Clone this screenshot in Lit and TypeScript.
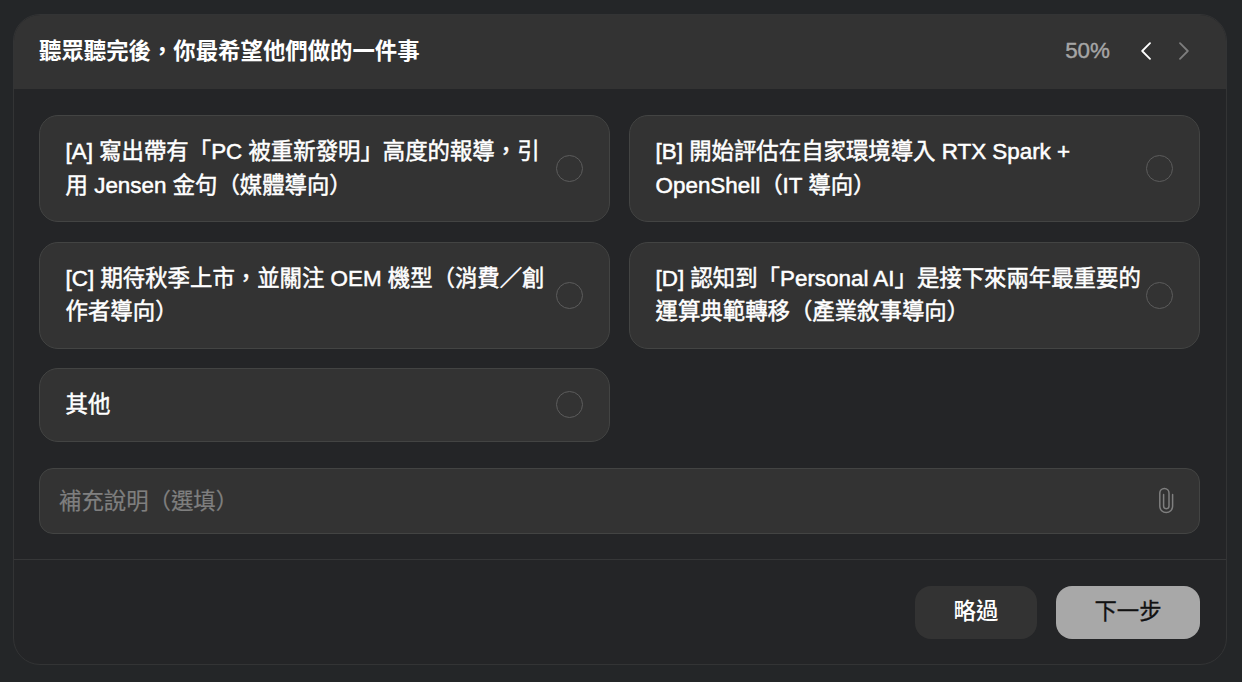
import { LitElement, html, css } from 'lit'
import { customElement, property, state } from 'lit/decorators.js'
import { classMap } from 'lit/directives/class-map.js'

interface Choice {
  id: string
  label: string
}

const CHOICES: Choice[] = [
  { id: 'a', label: '[A] 寫出帶有「PC 被重新發明」高度的報導，引用 Jensen 金句（媒體導向）' },
  { id: 'b', label: '[B] 開始評估在自家環境導入 RTX Spark + OpenShell（IT 導向）' },
  { id: 'c', label: '[C] 期待秋季上市，並關注 OEM 機型（消費／創作者導向）' },
  { id: 'd', label: '[D] 認知到「Personal AI」是接下來兩年最重要的運算典範轉移（產業敘事導向）' },
  { id: 'other', label: '其他' }
]

/**
 * A single selectable answer with a radio mark on the right.
 */
@customElement('choice-card')
export class ChoiceCard extends LitElement {
  @property({ type: String }) label = ''
  @property({ type: Boolean }) selected = false

  static styles = css`
    :host {
      display: block;
    }

    .card {
      display: flex;
      align-items: center;
      gap: 3px;
      box-sizing: border-box;
      width: 100%;
      padding: 19px 26px 19px 25.6px;
      border: 1px solid #434443;
      border-radius: 19px;
      background: #333333;
      color: #ffffff;
      font: inherit;
      text-align: left;
      cursor: pointer;
    }

    .label {
      flex: 1;
      min-width: 0;
      -webkit-text-stroke: 0.5px currentColor;
    }

    .mark {
      flex: none;
      box-sizing: border-box;
      width: 27px;
      height: 27px;
      border: 1px solid #5c5c5c;
      border-radius: 50%;
    }

    .mark--selected {
      border: 8px solid #ffffff;
    }
  `

  render() {
    return html`
      <button class="card" role="radio" aria-checked=${this.selected}>
        <span class="label">${this.label}</span>
        <span class=${classMap({ mark: true, 'mark--selected': this.selected })}></span>
      </button>
    `
  }
}

@customElement('app-root')
export class AppRoot extends LitElement {
  @state() private selected = ''

  static styles = css`
    :host {
      display: block;
      box-sizing: border-box;
      height: 682px;
      padding: 14px 15px 17px 13px;
      background: #242628;
      color: #ffffff;
      font-family: 'Liberation Sans', 'Noto Sans CJK TC', sans-serif;
      font-size: 22.4px;
      line-height: 33.5px;
    }

    .panel {
      display: flex;
      flex-direction: column;
      box-sizing: border-box;
      height: 651px;
      border: 1px solid #333435;
      border-radius: 27px;
      background: #242527;
      overflow: hidden;
    }

    .header {
      display: flex;
      align-items: center;
      box-sizing: border-box;
      height: 74px;
      padding: 0 23px 2px 25px;
      background: #333333;
    }

    .title {
      flex: 1;
      margin: 0;
      padding-top: 2px;
      font-size: inherit;
      font-weight: 700;
    }

    .progress {
      margin-right: 17px;
      color: #a6a6a6;
      -webkit-text-stroke: 0.4px currentColor;
    }

    .nav {
      display: grid;
      place-items: center;
      width: 38px;
      height: 38px;
      padding: 0;
      border: 0;
      border-radius: 50%;
      background: none;
      color: #ffffff;
    }

    .nav--disabled {
      color: #7d7d7d;
    }

    .body {
      display: flex;
      flex-direction: column;
      gap: 26.3px;
      box-sizing: border-box;
      height: 470px;
      padding: 26.2px 26px 25px 25px;
    }

    .choices {
      display: grid;
      grid-template-columns: 1fr 1fr;
      gap: 19.5px 19px;
    }

    .note {
      display: flex;
      align-items: center;
      box-sizing: border-box;
      height: 66px;
      padding: 0 20px 0 19px;
      border: 1px solid #434443;
      border-radius: 14px;
      background: #333333;
      color: #7f7f7f;
    }

    .note-text {
      flex: 1;
      padding-top: 2px;
      -webkit-text-stroke: 0.2px currentColor;
    }

    .footer {
      display: flex;
      flex: 1;
      align-items: center;
      justify-content: flex-end;
      gap: 19px;
      padding-right: 26px;
      border-top: 1px solid #363738;
    }

    .button {
      width: 122px;
      height: 53px;
      padding: 0 0 1px;
      border: 0;
      border-radius: 16px;
      background: #333333;
      color: #ffffff;
      font: inherit;
      font-weight: 500;
    }

    .button--primary {
      width: 144px;
      background: #a8a8a8;
      color: #111111;
      font-weight: 400;
      -webkit-text-stroke: 0.3px currentColor;
    }

    svg {
      display: block;
      fill: none;
      stroke: currentColor;
      stroke-linecap: round;
      stroke-linejoin: round;
    }
  `

  private select(id: string) {
    this.selected = id
  }

  render() {
    return html`
      <section class="panel">
        <header class="header">
          <h2 class="title">聽眾聽完後，你最希望他們做的一件事</h2>
          <span class="progress">50%</span>
          <button class="nav" aria-label="上一題">
            <svg width="10" height="18" viewBox="0 0 10 18" stroke-width="1.8">
              <path d="M9 1.2 1.2 9 9 16.8" />
            </svg>
          </button>
          <button class="nav nav--disabled" aria-label="下一題" disabled>
            <svg width="10" height="18" viewBox="0 0 10 18" stroke-width="1.8">
              <path d="M1 1.2 8.8 9 1 16.8" />
            </svg>
          </button>
        </header>

        <div class="body">
          <div class="choices" role="radiogroup">
            ${CHOICES.map(
              (choice) => html`
                <choice-card
                  .label=${choice.label}
                  .selected=${this.selected === choice.id}
                  @click=${() => this.select(choice.id)}
                ></choice-card>
              `
            )}
          </div>
          <div class="note">
            <span class="note-text">補充說明（選填）</span>
            <svg width="26" height="28" viewBox="0 0 26 28" stroke-width="1.5">
              <path d="M19.6 7.4v11.8a6.4 6.4 0 0 1-12.8 0V6a4.6 4.6 0 0 1 9.2 0v13a2.7 2.7 0 0 1-5.4 0V7.4" />
            </svg>
          </div>
        </div>

        <footer class="footer">
          <button class="button">略過</button>
          <button class="button button--primary">下一步</button>
        </footer>
      </section>
    `
  }
}
